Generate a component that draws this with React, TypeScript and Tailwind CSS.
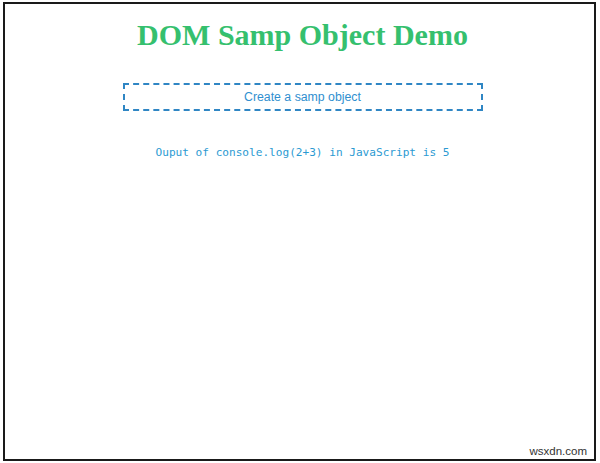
import React from "react";

export default function App() {
  return (
    <div className="w-[600px] h-[463px] bg-white overflow-hidden pt-[2px] pl-[3px]">
      <div className="relative w-[593px] h-[459px] border-2 border-[#1a1a1a] bg-white flex flex-col items-center pl-[6px]">
        <h1 className="mt-[16px] text-[30px] leading-[30px] font-bold text-[#35c06e] font-['Liberation_Serif','Times_New_Roman',serif]">
          DOM Samp Object Demo
        </h1>
        <div className="mt-[33px] w-[360px] h-[28px] border-2 border-dashed border-[#2f86c4] flex items-center justify-center text-[12.3px] leading-[24px] text-[#2f8fd0] font-['Liberation_Sans',Arial,sans-serif]">
          Create a samp object
        </div>
        <p className="mt-[34px] text-[11.1px] leading-[16px] text-[#2b9ad2] font-['DejaVu_Sans_Mono','Liberation_Mono',monospace]">
          Ouput of console.log(2+3) in JavaScript is 5
        </p>
        <span className="absolute right-[7px] bottom-[1px] text-[11.5px] leading-[14px] text-[#333333] font-['Liberation_Sans',Arial,sans-serif]">
          wsxdn.com
        </span>
      </div>
    </div>
  );
}
